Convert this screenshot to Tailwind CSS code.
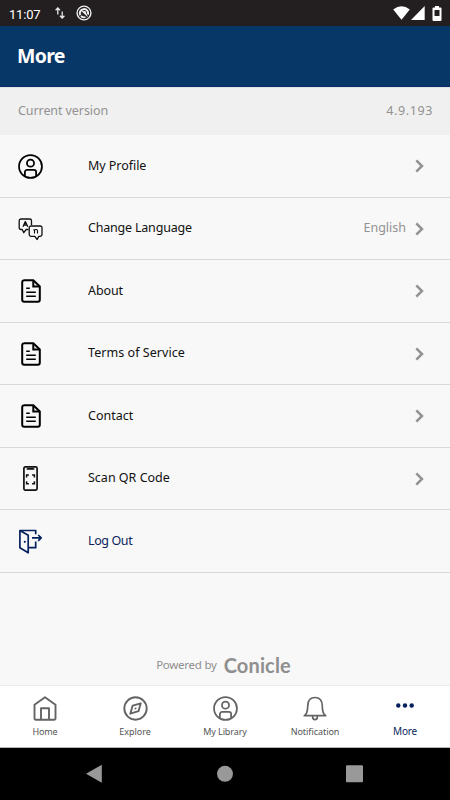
<!DOCTYPE html>
<html lang="en">
<head>
  <meta charset="UTF-8">
  <meta name="viewport" content="width=device-width, initial-scale=1.0">
  <title>More</title>
  <script src="https://cdn.jsdelivr.net/npm/@tailwindcss/browser@4"></script>
</head>
<body class="bg-black font-['Noto_Sans',sans-serif]">
  <!-- shared icons -->
  <svg class="hidden">
    <symbol id="user" viewBox="0 0 24 24">
      <circle cx="12" cy="12" r="11" />
      <circle cx="12" cy="8.8" r="3.4" />
      <path d="M6.600 21.300v-3.800a2.200 2.200 0 0 1 2.200-2.200h6.400a2.200 2.200 0 0 1 2.200 2.200v3.800" />
    </symbol>
    <symbol id="doc" viewBox="0 0 20 24">
      <path d="M3 1.200h9.300l6.500 6.300v13.300a2 2 0 0 1-2 2H3.200a2 2 0 0 1-2-2V3.200a2 2 0 0 1 2-2z" />
      <path d="M12.300 1.500v6h6" />
      <path d="M5.200 9.300h3.600M5.200 13.300h9.600M5.200 17.300h9.600" stroke-width="1.6" />
    </symbol>
    <symbol id="chevron" viewBox="0 0 9 14">
      <path d="M1.300 1.300 7 7l-5.700 5.700" />
    </symbol>
  </svg>

  <div class="flex flex-col w-[450px] h-[800px] overflow-hidden bg-[#f8f8f8] text-[12.5px] text-[#111]">
    <!-- status bar -->
    <div class="flex items-center h-[26px] shrink-0 bg-[#231f20] text-white">
      <span class="ml-[9px] w-[46px] pt-[2px] font-[Roboto,sans-serif] text-[13px] leading-none tracking-[-0.2px]">11:07</span>
      <svg class="w-[10px] h-[12px]" viewBox="0 0 10 12" fill="none" stroke="#e8e8e8" stroke-width="1.3">
        <path d="M2.800 7.500V1M.6 3.200 2.800 1 5 3.200M7.200 4.500V11M5 8.800 7.200 11l2.200-2.200" />
      </svg>
      <svg class="ml-[11px] w-[16px] h-[16px]" viewBox="0 0 16 16" fill="none" stroke="#f0f0f0">
        <circle cx="8" cy="8" r="6.900" stroke-width="1.400" />
        <path d="M4.300 10.300A4.200 4.200 0 1 1 12 9.600" stroke-width="2" />
        <path d="M5.400 6.300 12.200 12.400 9.300 6z" fill="#f0f0f0" stroke="none" />
        <path d="M5 11a4.200 4.200 0 0 0 4.500 1" stroke-width="1.800" />
      </svg>
      <svg class="ml-auto w-[17px] h-[14px]" viewBox="0 0 17 14" fill="#fff"><path d="M.2 3.500Q8.500-2.800 16.800 3.500L8.500 13.800z" /></svg>
      <svg class="ml-[1px] w-[14px] h-[14px]" viewBox="0 0 14 14" fill="#fff"><path d="M13.700 0v14H0z" /></svg>
      <svg class="ml-[7px] mr-[8px] w-[10px] h-[15px]" viewBox="0 0 10 15">
        <path d="M3 0h4v1.500h1.500a1 1 0 0 1 1 1V14a1 1 0 0 1-1 1h-7a1 1 0 0 1-1-1V2.500a1 1 0 0 1 1-1H3z" fill="#fff" />
        <path d="M2.500 4h5v6h-5z" fill="#231f20" />
      </svg>
    </div>

    <!-- header -->
    <div class="flex items-center h-[61px] shrink-0 pl-[17px] bg-[#063767] border-b border-[#0b2b6b]">
      <h1 class="text-[19.5px] leading-none font-bold text-white tracking-[-0.7px]">More</h1>
    </div>

    <div class="flex justify-between items-center h-[48px] shrink-0 px-[18px] bg-[#f0f0f0] border-t border-[#e3e3e3] text-[#929292]">
      <span class="tracking-[-0.08px]">Current version</span>
      <span class="-mr-[1px] tracking-[0.6px]">4.9.193</span>
    </div>

    <!-- menu -->
    <ul class="shrink-0">
      <li class="flex items-center h-[62.5px] pl-[18px] pr-[26px] pt-[1px] border-b border-[#d8d8d8]">
        <svg class="w-[25px] h-[25px] mr-[45px]" fill="none" stroke="#000" stroke-width="1.7"><use href="#user" /></svg>
        <span class="tracking-[-0.05px]">My Profile</span>
        <svg class="ml-auto w-[9px] h-[14px]" fill="none" stroke="#929292" stroke-width="2.5"><use href="#chevron" /></svg>
      </li>
      <li class="flex items-center h-[62.5px] pl-[18px] pr-[26px] pt-[1px] border-b border-[#d8d8d8]">
        <svg class="w-[25px] h-[24px] mr-[45px]" viewBox="0 0 25 24" fill="none" stroke="#111" stroke-width="1.300" stroke-linejoin="round">
          <path d="M10.500 12.500H8.200L5.800 15.700 4.200 12.500H3a1.800 1.800 0 0 1-1.800-1.800V3.800A1.800 1.800 0 0 1 3 2h8.700a1.800 1.800 0 0 1 1.800 1.800V8" />
          <path d="M13 9h9.200A1.800 1.800 0 0 1 24 10.800v6.700a1.800 1.800 0 0 1-1.800 1.800h-1.400l-1.600 3.200-2.400-3.200H13a1.800 1.800 0 0 1-1.800-1.800v-6.700A1.800 1.800 0 0 1 13 9z" />
          <path d="M5 9.800 7.300 4.500l2.500 5.300M5.900 8h3.200" />
          <path d="M15.500 12.500l1 .8v3.300M16.500 13c1-.8 3-.8 3 .7v2.900" stroke-width="1.100" />
        </svg>
        <span class="tracking-[-0.2px]">Change Language</span>
        <span class="ml-auto mr-[9px] text-[#929292]">English</span>
        <svg class="w-[9px] h-[14px]" fill="none" stroke="#929292" stroke-width="2.5"><use href="#chevron" /></svg>
      </li>
      <li class="flex items-center h-[62.5px] pl-[20.5px] pr-[26px] pt-[1px] border-b border-[#d8d8d8]">
        <svg class="w-[20px] h-[24px] mr-[47.5px]" fill="none" stroke="#000" stroke-width="2"><use href="#doc" /></svg>
        <span class="tracking-[-0.1px]">About</span>
        <svg class="ml-auto w-[9px] h-[14px]" fill="none" stroke="#929292" stroke-width="2.5"><use href="#chevron" /></svg>
      </li>
      <li class="flex items-center h-[62.5px] pl-[20.5px] pr-[26px] pt-[1px] border-b border-[#d8d8d8]">
        <svg class="w-[20px] h-[24px] mr-[47.5px]" fill="none" stroke="#000" stroke-width="2"><use href="#doc" /></svg>
        <span class="tracking-[0.05px]">Terms of Service</span>
        <svg class="ml-auto w-[9px] h-[14px]" fill="none" stroke="#929292" stroke-width="2.5"><use href="#chevron" /></svg>
      </li>
      <li class="flex items-center h-[62.5px] pl-[20.5px] pr-[26px] pt-[1px] border-b border-[#d8d8d8]">
        <svg class="w-[20px] h-[24px] mr-[47.5px]" fill="none" stroke="#000" stroke-width="2"><use href="#doc" /></svg>
        <span>Contact</span>
        <svg class="ml-auto w-[9px] h-[14px]" fill="none" stroke="#929292" stroke-width="2.5"><use href="#chevron" /></svg>
      </li>
      <li class="flex items-center h-[62.5px] pl-[23px] pr-[26px] pt-[1px] border-b border-[#d8d8d8]">
        <svg class="w-[15px] h-[25px] mr-[50px]" viewBox="0 0 15 25" fill="none" stroke="#111">
          <rect x=".9" y=".9" width="13.200" height="23.200" rx="1.500" stroke-width="1.700" />
          <path d="M4.500 2.200v.6h6v-.6" stroke-width="1.700" />
          <path d="M3.600 11.500V9h2.300M9.100 9h2.300v2.500M11.400 15.200v2.600H9.100M5.900 17.800H3.600v-2.600" stroke-width="1.500" />
        </svg>
        <span>Scan QR Code</span>
        <svg class="ml-auto w-[9px] h-[14px]" fill="none" stroke="#929292" stroke-width="2.5"><use href="#chevron" /></svg>
      </li>
      <li class="flex items-center h-[62.5px] pl-[18px] pr-[26px] pt-[1px] border-b border-[#d8d8d8] text-[#0a1f5c]">
        <svg class="w-[25px] h-[25px] mr-[45px]" viewBox="0 0 25 25" fill="none" stroke="#05205f" stroke-width="1.700" stroke-linejoin="round">
          <path d="M1.900 1.500v17.300l8.300 5V6.200L1.900 1.500H17.700V5.300M17.700 12.500v6.200h-7" />
          <path d="M14 8.900h9M20.200 6l3 2.900-3 2.900" />
          <circle cx="6.800" cy="12.800" r="1.100" fill="#05205f" stroke="none" />
        </svg>
        <span class="tracking-[-0.4px]">Log Out</span>
      </li>
    </ul>

    <div class="flex justify-center items-center mt-auto mb-[9px] h-[22px] pr-[3px] text-[#8f8f8f]">
      <span class="text-[11.5px] tracking-[-0.25px]">Powered by</span>
      <span class="ml-[7px] font-[Lato,sans-serif] font-bold text-[20px] leading-none tracking-[0.15px]">Conicle</span>
    </div>

    <!-- tab bar -->
    <nav class="grid grid-cols-5 h-[62px] shrink-0 bg-white border-t border-[#ececec] text-[9px] leading-[12px] text-[#555]">
      <div class="flex flex-col items-center pt-[9.5px]">
        <svg class="w-[24px] h-[25px] mb-[5.5px]" viewBox="0 0 24 25" fill="none" stroke="#646464" stroke-width="1.900" stroke-linejoin="round">
          <path d="M1.500 8.700 12 1.300l10.500 7.400v13.800a1.300 1.300 0 0 1-1.300 1.300H2.800a1.300 1.300 0 0 1-1.300-1.300z" />
          <path d="M8 23.500V12.300h8v11.200" />
        </svg>
        <span class="tracking-[-0.15px]">Home</span>
      </div>
      <div class="flex flex-col items-center pt-[9.5px]">
        <svg class="w-[25px] h-[25px] mb-[5.5px]" viewBox="0 0 25 25" fill="none" stroke="#646464" stroke-width="1.900" stroke-linejoin="round">
          <circle cx="12.500" cy="12.500" r="11.200" />
          <path d="M17.700 7.300 15.500 15.200 7.300 17.700 9.700 9.600z" />
          <path d="M11.700 13.300l1.600-1.600" stroke-width="1.300" />
        </svg>
        <span>Explore</span>
      </div>
      <div class="flex flex-col items-center pt-[9.5px]">
        <svg class="w-[25px] h-[25px] mb-[5.5px]" fill="none" stroke="#646464" stroke-width="1.700"><use href="#user" /></svg>
        <span class="tracking-[-0.1px]">My Library</span>
      </div>
      <div class="flex flex-col items-center pt-[9.500px]">
        <svg class="w-[25px] h-[25px] mb-[5.500px]" viewBox="0 0 25 25" fill="none" stroke="#646464" stroke-width="1.700" stroke-linejoin="round">
          <path d="M1.300 19.700c2.800-1.900 3.400-4.500 3.400-9.500C4.700 4 7.500 1.500 12 1.500s7.300 2.500 7.300 8.700c0 5 .6 7.600 3.400 9.500z" />
          <path d="M9.700 20v1.300a2.300 2.300 0 0 0 4.600 0V20" />
        </svg>
        <span class="tracking-[-0.05px]">Notification</span>
      </div>
      <div class="flex flex-col items-center pt-[17px] text-[#0a1f5c]">
        <svg class="w-[18px] h-[5px] mb-[17px]" viewBox="0 0 18 5" fill="#05205f">
          <circle cx="2.300" cy="2.500" r="2.200" /><circle cx="9" cy="2.500" r="2.200" /><circle cx="15.700" cy="2.500" r="2.200" />
        </svg>
        <span class="text-[10px] tracking-[-0.2px]">More</span>
      </div>
    </nav>

    <!-- system buttons -->
    <div class="flex items-center h-[53px] shrink-0 bg-black border-t border-[#b5b5b5]">
      <svg class="w-full h-[52px]" viewBox="0 0 450 52" fill="#999">
        <path d="M86 25.800 101.800 16.800v18z" />
        <circle cx="225" cy="25.800" r="8" />
        <rect x="346" y="17.300" width="17" height="17" rx="1" />
      </svg>
    </div>
  </div>
</body>
</html>
